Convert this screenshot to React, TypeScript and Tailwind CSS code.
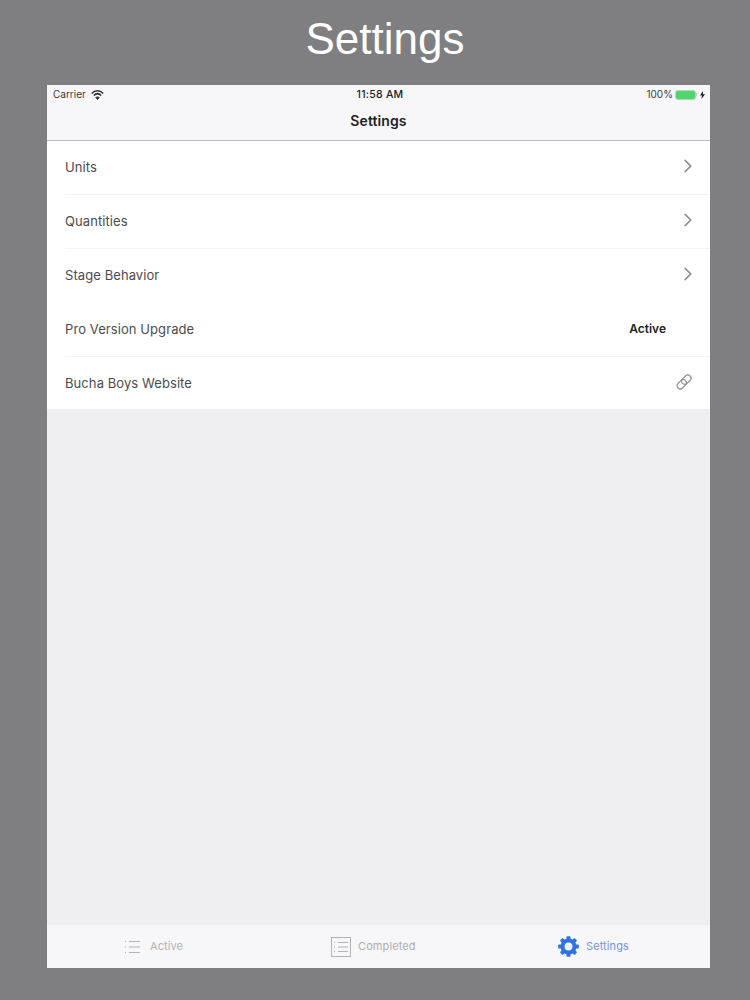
import { ChevronRight } from "lucide-react";

type RowProps = {
  label: string;
  right: "chevron" | "active" | "link";
  divider: boolean;
};

const rows: RowProps[] = [
  { label: "Units", right: "chevron", divider: true },
  { label: "Quantities", right: "chevron", divider: true },
  { label: "Stage Behavior", right: "chevron", divider: false },
  { label: "Pro Version Upgrade", right: "active", divider: true },
  { label: "Bucha Boys Website", right: "link", divider: false },
];

const LinkIcon = () => {
  return (
    <svg width="18" height="18" viewBox="0 0 18 18" fill="none" stroke="#8f8f92" strokeWidth="1.2" className="-mt-[3px] ml-[-1px]">
      <g transform="rotate(-45 9 9)">
        <rect x="0.500" y="5.800" width="10.500" height="6.400" rx="3.200" />
        <rect x="7" y="5.800" width="10.500" height="6.400" rx="3.200" />
      </g>
    </svg>
  );
};

const Row = ({ label, right, divider }: RowProps) => {
  return (
    <div className="h-[54px] last:h-[52px] last:pt-[2px] pl-[18px] flex items-stretch">
      <div
        className={`flex-1 flex items-center justify-between pr-[17px] border-b ${
          divider ? "border-[#f3f3f5]" : "border-transparent"
        }`}
      >
        <span className="text-[13px] text-[#4c4c4e] tracking-[0.08px]">{label}</span>
        {right === "chevron" && (
          <ChevronRight size={22} strokeWidth={1.9} className="text-[#8a8a8e] -mr-[6px] -mt-[3px]" />
        )}
        {right === "active" && (
          <span className="text-[12px] font-semibold text-[#222224] mr-[27px] -mt-[1px]">Active</span>
        )}
        {right === "link" && <LinkIcon />}
      </div>
    </div>
  );
};

const ListIcon = ({ boxed }: { boxed: boolean }) => {
  return (
    <svg width={boxed ? 20 : 15} height={boxed ? 20 : 14} viewBox={boxed ? "0 0 20 20" : "0 0 15 14"} fill="none" stroke="#b3b3b6" strokeWidth="1">
      {boxed && <rect x="0.5" y="0.5" width="19" height="19" />}
      {boxed ? (
        <>
          <path d="M7 5.500h10M7 10h10M7 14.500h10" />
          <path d="M3 5.500h2M3 10h2M3 14.500h2" strokeDasharray="1 1" />
        </>
      ) : (
        <>
          <path d="M4 1.500h11M4 7h11M4 12.500h11" />
          <path d="M0 1.500h2M0 7h2M0 12.500h2" strokeDasharray="1 1" />
        </>
      )}
    </svg>
  );
};

const GearIcon = () => {
  const teeth = [0, 45, 90, 135, 180, 225, 270, 315];
  return (
    <svg width="21" height="21" viewBox="0 0 24 24">
      <circle cx="12" cy="12" r="6.800" fill="none" stroke="#2f73e0" strokeWidth="4.600" />
      {teeth.map((deg) => (
        <rect key={deg} x="9.700" y="0.200" width="4.600" height="6" rx="1" fill="#2f73e0" transform={`rotate(${deg} 12 12)`} />
      ))}
    </svg>
  );
};

const App = () => {
  return (
    <div className="w-[750px] h-[1000px] bg-[#7f7e81] flex flex-col items-center overflow-hidden font-['Inter',sans-serif]">
      <h1 className="h-[85px] pb-[7px] pl-[20px] flex items-center text-[44px] text-white font-['Liberation_Sans',sans-serif]">
        Settings
      </h1>
      <div className="w-[663px] h-[883px] ml-[7px] bg-[#efeef1] flex flex-col">
        <div className="h-[56px] bg-[#f7f6f9] border-b border-[#bcbbc0] flex flex-col shrink-0">
          <div className="h-[19px] pl-[6px] pr-[4px] flex items-center justify-between text-[10px] text-[#3a3a3c]">
            <div className="w-[110px] flex items-center gap-[5px]">
              <span>Carrier</span>
              <svg width="13" height="10" viewBox="0 0 13 10" fill="none" stroke="#2c2c2e" strokeWidth="1.500">
                <path d="M.8 3.400C4-.1 9-.1 12.200 3.400" />
                <path d="M2.800 5.500C5 3.300 8 3.300 10.200 5.500" />
                <path d="M6.500 9.500 4.700 7.500C5.700 6.700 7.300 6.700 8.300 7.500z" fill="#2c2c2e" strokeWidth="0.800" />
              </svg>
            </div>
            <span className="text-[10.500px] font-medium text-[#222224] tracking-[0.25px] ml-[1px]">11:58 AM</span>
            <div className="w-[110px] flex items-center justify-end gap-[2px]">
              <span>100%</span>
              <span className="w-[21px] h-[10px] rounded-[3px] border border-[#a5dfb3] bg-[#55d46e]" />
              <span className="w-[1px] h-[3px] bg-[#a5dfb3] -ml-[2px]" />
              <svg width="5" height="8" viewBox="0 0 5 8" fill="#222224" className="ml-[1px] mr-[1px]">
                <path d="M3 0 0 4.500h2L1.500 8 5 3.300H3z" />
              </svg>
            </div>
          </div>
          <div className="h-[35px] pb-[2px] flex items-center justify-center text-[14px] font-semibold text-[#222224] tracking-[0.1px]">
            Settings
          </div>
        </div>
        <div className="bg-white shrink-0">
          {rows.map((row) => (
            <Row key={row.label} {...row} />
          ))}
        </div>
        <div className="flex-1" />
        <div className="h-[43px] bg-[#f7f6f9] grid grid-cols-3 shrink-0 text-[11px] tracking-[0.1px]">
          <div className="flex items-center justify-start gap-[10px] pl-[78px] text-[#b3b3b6]">
            <ListIcon boxed={false} />
            <span>Active</span>
          </div>
          <div className="flex items-center justify-start gap-[7px] pl-[63px] text-[#aeaeb1]">
            <ListIcon boxed />
            <span>Completed</span>
          </div>
          <div className="flex items-center justify-start gap-[7px] pl-[69px] text-[#7397dc]">
            <GearIcon />
            <span>Settings</span>
          </div>
        </div>
      </div>
    </div>
  );
};

export default App;
